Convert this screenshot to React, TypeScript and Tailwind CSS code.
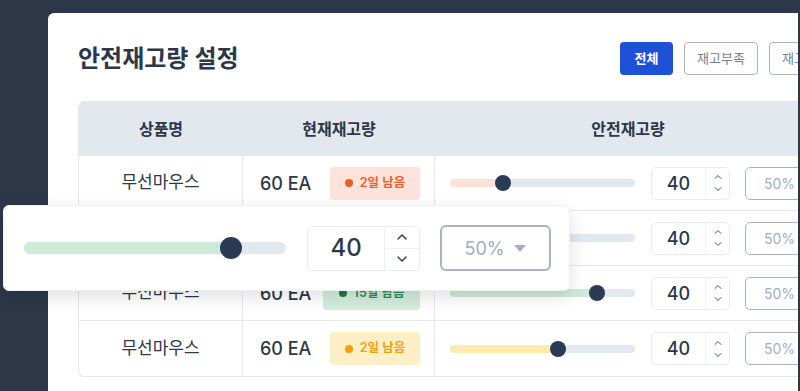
import React from "react";
import { ChevronUp, ChevronDown } from "lucide-react";

const FONT = { fontFamily: 'Inter, "Noto Sans CJK KR", "Noto Sans", sans-serif' };

type Row = {
  badge: string;
  badgeBg: string;
  badgeText: string;
  dot: string;
  badgeW: string;
  fill: string;
  thumb: number; // px from track start
};

const rows: Row[] = [
  { badge: "2일 남음", badgeBg: "bg-[#fde3da]", badgeText: "text-[#f0612e]", dot: "bg-[#f25c22]", badgeW: "w-[90px]", fill: "bg-[#fde0d6]", thumb: 53 },
  { badge: "2일 남음", badgeBg: "bg-[#fde3da]", badgeText: "text-[#f0612e]", dot: "bg-[#f25c22]", badgeW: "w-[90px]", fill: "bg-[#fde0d6]", thumb: 53 },
  { badge: "15일 남음", badgeBg: "bg-[#d3ecdb]", badgeText: "text-[#2f8a57]", dot: "bg-[#1f7a45]", badgeW: "w-[97px]", fill: "bg-[#cdebd6]", thumb: 147 },
  { badge: "2일 남음", badgeBg: "bg-[#fef0c4]", badgeText: "text-[#f4a00c]", dot: "bg-[#f59e0b]", badgeW: "w-[90px]", fill: "bg-[#fdeab0]", thumb: 108 },
];

function Caret({ w = 10, h = 6, color = "#a0aec0" }: { w?: number; h?: number; color?: string }) {
  return (
    <svg width={w} height={h} viewBox="0 0 10 6" className="shrink-0">
      <path d="M0 0 L10 0 L5 6 Z" fill={color} />
    </svg>
  );
}

function TableRow({ r, last }: { r: Row; last: boolean }) {
  return (
    <div className={`flex h-[55px] ${last ? "" : "border-b border-[#e5e9ef]"}`}>
      <div className="w-[164px] shrink-0 flex items-center justify-center text-[17px] text-[#2d3748] border-r border-[#e5e9ef]">
        무선마우스
      </div>
      <div className="w-[192px] shrink-0 flex items-center justify-between pl-[17px] pr-[14px] border-r border-[#e5e9ef]">
        <span className="text-[18px] font-medium text-[#2d3748]">60 EA</span>
        <span className={`${r.badgeW} h-[33px] rounded-[4px] ${r.badgeBg} ${r.badgeText} flex items-center justify-center gap-[7px] text-[12.5px] font-semibold`}>
          <span className={`w-[8px] h-[8px] rounded-full ${r.dot}`} />
          {r.badge}
        </span>
      </div>
      <div className="flex-1 flex items-center pl-[15px] min-w-0">
        <div className="relative w-[185px] shrink-0 h-[8px] rounded-full bg-[#e2e8f0]">
          <div className={`absolute left-0 top-0 h-full rounded-full ${r.fill}`} style={{ width: r.thumb }} />
          <div
            className="absolute top-1/2 w-[16px] h-[16px] rounded-full bg-[#2b3a55] -translate-y-1/2 -translate-x-1/2"
            style={{ left: r.thumb }}
          />
        </div>
        <div className="ml-[16px] w-[79px] shrink-0 h-[33px] flex border border-[#e8ecf1] rounded-[5px]">
          <div className="flex-1 flex items-center justify-center text-[18px] font-medium text-[#2d3748]">40</div>
          <div className="w-[24px] flex flex-col border-l border-[#eef1f4] text-[#4a5568]">
            <div className="flex-1 flex items-end justify-center"><ChevronUp size={12} strokeWidth={2} /></div>
            <div className="flex-1 flex items-start justify-center"><ChevronDown size={12} strokeWidth={2} /></div>
          </div>
        </div>
        <div className="ml-[15px] w-[72px] shrink-0 h-[33px] flex items-center gap-[6px] pl-[18px] border border-[#a9b4c2] rounded-[5px] text-[14px] text-[#a0aec0]">
          50%
          <Caret w={9} h={5} />
        </div>
      </div>
    </div>
  );
}

export default function App() {
  return (
    <div className="relative w-[800px] h-[391px] overflow-hidden bg-[#2d3748] pt-[13px] pl-[48px] pr-[2px]" style={FONT}>
      <div className="bg-white h-full rounded-tl-[6px] overflow-hidden pt-[29px] pl-[30px]">
        <div className="flex items-center h-[33px] w-[800px]">
          <h1 className="w-[542px] shrink-0 text-[24px] font-semibold text-[#2d3748]">안전재고량 설정</h1>
          <div className="flex gap-[11px] shrink-0">
            <button className="w-[53px] h-[33px] rounded-[4px] bg-[#1e50d8] text-white text-[13px] font-semibold">전체</button>
            <button className="w-[74px] h-[33px] rounded-[4px] border border-[#a9b4c2] text-[#718096] text-[13px]">재고부족</button>
            <button className="w-[74px] h-[33px] rounded-[4px] border border-[#a9b4c2] text-[#718096] text-[13px]">재고과다</button>
          </div>
        </div>
        <div className="mt-[26px] w-[744px] rounded-[6px] border border-[#e5e9ef] border-t-0 overflow-hidden">
          <div className="flex h-[55px] bg-[#e2e8ed] text-[16px] font-semibold text-[#2d3748]">
            <div className="w-[164px] shrink-0 flex items-center justify-center">상품명</div>
            <div className="w-[192px] shrink-0 flex items-center justify-center">현재재고량</div>
            <div className="flex-1 flex items-center justify-center">안전재고량</div>
          </div>
          {rows.map((r, i) => (
            <TableRow key={i} r={r} last={i === rows.length - 1} />
          ))}
        </div>
      </div>

      {/* Enlarged popover */}
      <div className="absolute left-[3px] top-[205px] w-[567px] h-[86px] bg-white rounded-[6px] border border-[#eef0f3] shadow-[0_6px_18px_rgba(0,0,0,0.12)] flex items-center pl-[20px]">
        <div className="relative w-[262px] shrink-0 h-[12px] rounded-full bg-[#e2e8f0]">
          <div className="absolute left-0 top-0 h-full rounded-full bg-[#cdebd6]" style={{ width: 207 }} />
          <div className="absolute top-1/2 left-[207px] w-[22px] h-[22px] rounded-full bg-[#2b3a55] -translate-y-1/2 -translate-x-1/2" />
        </div>
        <div className="ml-[21px] w-[113px] shrink-0 h-[45px] flex border border-[#e8ecf1] rounded-[5px]">
          <div className="flex-1 flex items-center justify-center text-[24px] font-medium text-[#2d3748]">40</div>
          <div className="w-[35px] flex flex-col border-l border-[#eef1f4] text-[#2d3748]">
            <div className="flex-1 flex items-center justify-center border-b border-[#eef1f4]"><ChevronUp size={16} strokeWidth={2} /></div>
            <div className="flex-1 flex items-center justify-center"><ChevronDown size={16} strokeWidth={2} /></div>
          </div>
        </div>
        <div className="ml-[20px] w-[111px] shrink-0 h-[46px] flex items-center justify-center gap-[10px] border-2 border-[#a9b4c2] rounded-[6px] text-[18px] text-[#a0aec0]">
          50%
          <Caret w={12} h={7} />
        </div>
      </div>
    </div>
  );
}
